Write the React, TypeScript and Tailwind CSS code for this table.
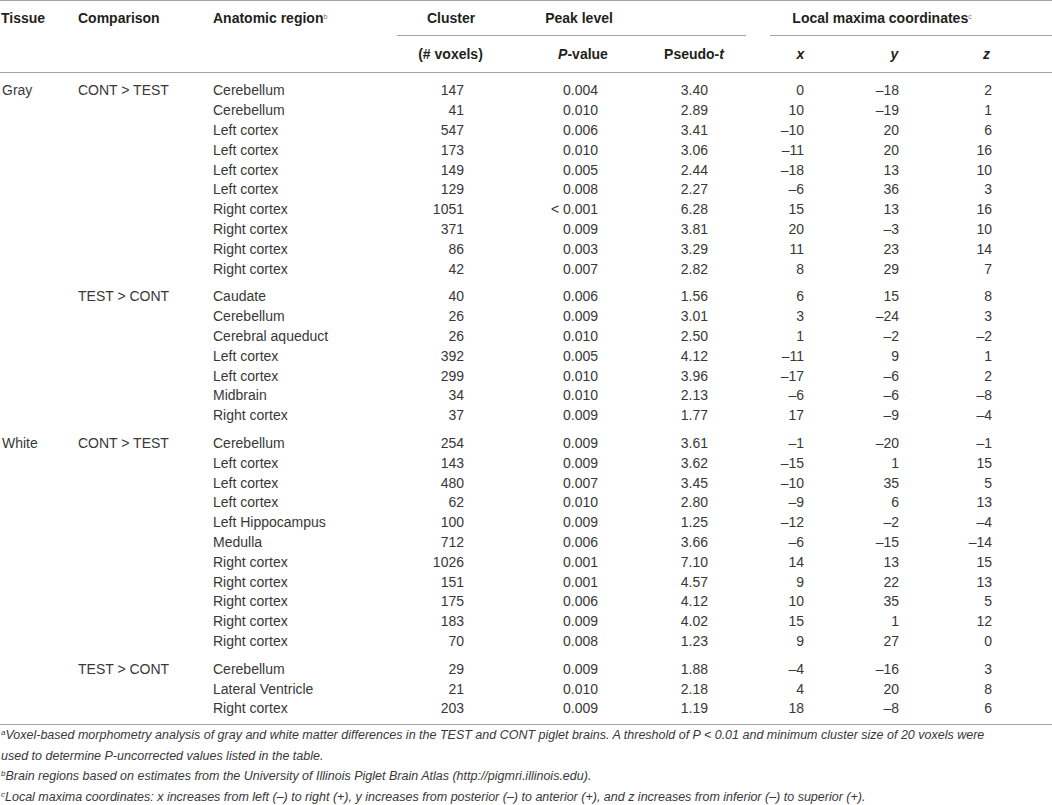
import React from "react";

type Row = [string, string, string, string, string, string, string, string, string];

const groups: Row[][] = [
  [
    ["Gray", "CONT > TEST", "Cerebellum", "147", "0.004", "3.40", "0", "–18", "2"],
    ["", "", "Cerebellum", "41", "0.010", "2.89", "10", "–19", "1"],
    ["", "", "Left cortex", "547", "0.006", "3.41", "–10", "20", "6"],
    ["", "", "Left cortex", "173", "0.010", "3.06", "–11", "20", "16"],
    ["", "", "Left cortex", "149", "0.005", "2.44", "–18", "13", "10"],
    ["", "", "Left cortex", "129", "0.008", "2.27", "–6", "36", "3"],
    ["", "", "Right cortex", "1051", "< 0.001", "6.28", "15", "13", "16"],
    ["", "", "Right cortex", "371", "0.009", "3.81", "20", "–3", "10"],
    ["", "", "Right cortex", "86", "0.003", "3.29", "11", "23", "14"],
    ["", "", "Right cortex", "42", "0.007", "2.82", "8", "29", "7"],
  ],
  [
    ["", "TEST > CONT", "Caudate", "40", "0.006", "1.56", "6", "15", "8"],
    ["", "", "Cerebellum", "26", "0.009", "3.01", "3", "–24", "3"],
    ["", "", "Cerebral aqueduct", "26", "0.010", "2.50", "1", "–2", "–2"],
    ["", "", "Left cortex", "392", "0.005", "4.12", "–11", "9", "1"],
    ["", "", "Left cortex", "299", "0.010", "3.96", "–17", "–6", "2"],
    ["", "", "Midbrain", "34", "0.010", "2.13", "–6", "–6", "–8"],
    ["", "", "Right cortex", "37", "0.009", "1.77", "17", "–9", "–4"],
  ],
  [
    ["White", "CONT > TEST", "Cerebellum", "254", "0.009", "3.61", "–1", "–20", "–1"],
    ["", "", "Left cortex", "143", "0.009", "3.62", "–15", "1", "15"],
    ["", "", "Left cortex", "480", "0.007", "3.45", "–10", "35", "5"],
    ["", "", "Left cortex", "62", "0.010", "2.80", "–9", "6", "13"],
    ["", "", "Left Hippocampus", "100", "0.009", "1.25", "–12", "–2", "–4"],
    ["", "", "Medulla", "712", "0.006", "3.66", "–6", "–15", "–14"],
    ["", "", "Right cortex", "1026", "0.001", "7.10", "14", "13", "15"],
    ["", "", "Right cortex", "151", "0.001", "4.57", "9", "22", "13"],
    ["", "", "Right cortex", "175", "0.006", "4.12", "10", "35", "5"],
    ["", "", "Right cortex", "183", "0.009", "4.02", "15", "1", "12"],
    ["", "", "Right cortex", "70", "0.008", "1.23", "9", "27", "0"],
  ],
  [
    ["", "TEST > CONT", "Cerebellum", "29", "0.009", "1.88", "–4", "–16", "3"],
    ["", "", "Lateral Ventricle", "21", "0.010", "2.18", "4", "20", "8"],
    ["", "", "Right cortex", "203", "0.009", "1.19", "18", "–8", "6"],
  ],
];

function DataRow({ r }: { r: Row }) {
  return (
    <div className="flex h-[19.8px] items-center whitespace-nowrap">
      <div className="w-[78px] pl-[2px]">{r[0]}</div>
      <div className="w-[135px]">{r[1]}</div>
      <div className="w-[184px]">{r[2]}</div>
      <div className="w-[67px] text-right">{r[3]}</div>
      <div className="w-[134px] text-right">{r[4]}</div>
      <div className="w-[110px] text-right">{r[5]}</div>
      <div className="w-[96px] text-right">{r[6]}</div>
      <div className="w-[95px] text-right">{r[7]}</div>
      <div className="w-[93px] text-right">{r[8]}</div>
    </div>
  );
}

export default function App() {
  return (
    <div
      className="w-[1052px] h-[805px] bg-white overflow-hidden text-[#383838]"
      style={{ fontFamily: '"Liberation Sans", Arial, sans-serif' }}
    >
      <div className="h-px bg-[#a3a3a3]" />
      {/* header row 1 */}
      <div className="flex h-[34px] items-center whitespace-nowrap text-[14px] font-bold text-[#231f20]">
        <div className="w-[78px] pl-[1px]">Tissue</div>
        <div className="w-[135px]">Comparison</div>
        <div className="w-[184px]">
          Anatomic region
          <span className="relative -top-[4px] text-[7px] font-normal leading-none text-[#777]">b</span>
        </div>
        <div className="w-[108px] text-center">Cluster</div>
        <div className="w-[148px] text-center">Peak level</div>
        <div className="w-[117px]" />
        <div className="w-[224px] text-center">
          Local maxima coordinates
          <span className="relative -top-[4px] text-[7px] font-normal leading-none text-[#777]">c</span>
        </div>
      </div>
      {/* sub-rules */}
      <div className="flex h-px">
        <div className="w-[397px]" />
        <div className="w-[349px] bg-[#a3a3a3]" />
        <div className="w-[24px]" />
        <div className="flex-1 bg-[#a3a3a3]" />
      </div>
      {/* header row 2 */}
      <div className="flex h-[36px] items-center whitespace-nowrap text-[14px] font-bold text-[#231f20]">
        <div className="w-[397px]" />
        <div className="w-[107px] text-center">(# voxels)</div>
        <div className="w-[158px] text-center">
          <i>P</i>-value
        </div>
        <div className="w-[64px] text-center">
          Pseudo-<i>t</i>
        </div>
        <div className="w-[149px] text-center">
          <i>x</i>
        </div>
        <div className="w-[39px] text-center">
          <i>y</i>
        </div>
        <div className="w-[76px] text-right">
          <i>z</i>
        </div>
      </div>
      <div className="h-px bg-[#a3a3a3]" />
      {/* body */}
      <div className="pt-[8px] pb-[5px] text-[14px]">
        {groups.map((g, gi) => (
          <div key={gi} className={gi > 0 ? "mt-[8px]" : ""}>
            {g.map((r, ri) => (
              <DataRow key={ri} r={r} />
            ))}
          </div>
        ))}
      </div>
      <div className="h-px bg-[#a3a3a3]" />
      {/* footnotes */}
      <div className="pl-[1px] text-[12.5px] italic leading-[20.8px] text-[#383838] whitespace-nowrap">
        <div>
          <span className="relative -top-[4px] text-[8px] leading-none">a</span>
          Voxel-based morphometry analysis of gray and white matter differences in the TEST and CONT piglet brains. A
          threshold of P &lt; 0.01 and minimum cluster size of 20 voxels were
        </div>
        <div>used to determine P-uncorrected values listed in the table.</div>
        <div>
          <span className="relative -top-[4px] text-[8px] leading-none">b</span>
          Brain regions based on estimates from the University of Illinois Piglet Brain Atlas (http://pigmri.illinois.edu).
        </div>
        <div>
          <span className="relative -top-[4px] text-[8px] leading-none">c</span>
          Local maxima coordinates: x increases from left (–) to right (+), y increases from posterior (–) to anterior
          (+), and z increases from inferior (–) to superior (+).
        </div>
      </div>
    </div>
  );
}
